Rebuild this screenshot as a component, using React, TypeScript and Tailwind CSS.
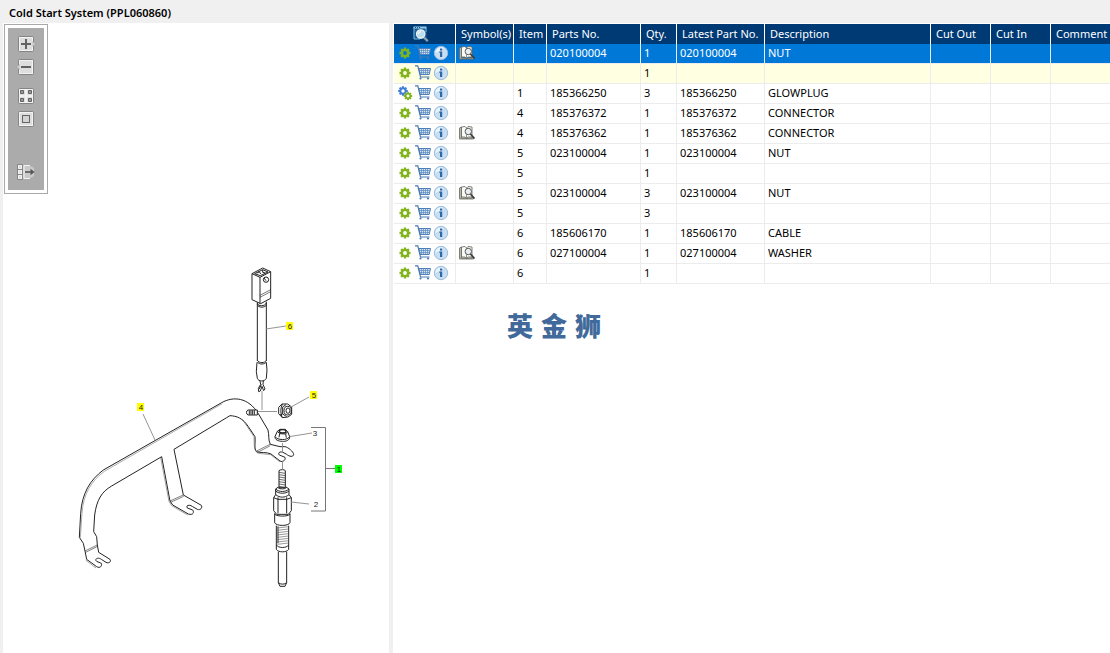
import { useState } from 'react'
import type { ReactNode } from 'react'

type Part = {
  item: string
  partNo: string
  qty: string
  description: string
  symbol?: boolean
  kit?: boolean
}

const parts: Part[] = [
  { item: '', partNo: '020100004', qty: '1', description: 'NUT', symbol: true },
  { item: '', partNo: '', qty: '1', description: '' },
  { item: '1', partNo: '185366250', qty: '3', description: 'GLOWPLUG', kit: true },
  { item: '4', partNo: '185376372', qty: '1', description: 'CONNECTOR' },
  { item: '4', partNo: '185376362', qty: '1', description: 'CONNECTOR', symbol: true },
  { item: '5', partNo: '023100004', qty: '1', description: 'NUT' },
  { item: '5', partNo: '', qty: '1', description: '' },
  { item: '5', partNo: '023100004', qty: '3', description: 'NUT', symbol: true },
  { item: '5', partNo: '', qty: '3', description: '' },
  { item: '6', partNo: '185606170', qty: '1', description: 'CABLE' },
  { item: '6', partNo: '027100004', qty: '1', description: 'WASHER', symbol: true },
  { item: '6', partNo: '', qty: '1', description: '' },
]

const headers = ['Symbol(s)', 'Item', 'Parts No.', 'Qty.', 'Latest Part No.', 'Description', 'Cut Out', 'Cut In', 'Comment']

function Gear({ cx, cy, r, color }: { cx: number; cy: number; r: number; color: string }) {
  return (
    <g stroke={color} fill="none">
      {[0, 45, 90, 135].map((a) => (
        <path key={a} d={`M${cx - r} ${cy}H${cx - r * 0.55}M${cx + r * 0.55} ${cy}H${cx + r}`} strokeWidth={r * 0.42} transform={`rotate(${a} ${cx} ${cy})`} />
      ))}
      <circle cx={cx} cy={cy} r={r * 0.56} strokeWidth={r * 0.42} />
    </g>
  )
}

function GearIcon({ kit }: { kit?: boolean }) {
  return (
    <svg width="16" height="16" viewBox="0 0 16 16">
      {kit ? (
        <>
          <Gear cx={6} cy={6} r={4.8} color="#3f7fd6" />
          <Gear cx={11} cy={11} r={4.2} color="#7fb51c" />
        </>
      ) : (
        <Gear cx={8} cy={8} r={5.5} color="#82b41e" />
      )}
    </svg>
  )
}

function CartIcon() {
  return (
    <svg width="18" height="16" viewBox="0 0 18 16" fill="none">
      <path d="M3.8 3.500H15.500L14.200 9.500H5.200Z" fill="#d3e2f2" stroke="#4d7db3" />
      <path d="M4.500 5.500H15M5 7.500H14.600M6.500 3.500V9.500M8.500 3.500V9.500M10.500 3.500V9.500M12.500 3.500V9.500" stroke="#5c8bbf" strokeWidth=".7" />
      <path d="M0 .8H2.800L5.500 12H14.500" stroke="#4b7bb0" strokeWidth="1.2" />
      <circle cx="5.5" cy="13.5" r="1.1" fill="#4b7bb0" />
      <circle cx="13" cy="13.5" r="1.1" fill="#4b7bb0" />
    </svg>
  )
}

function InfoIcon() {
  return (
    <svg width="16" height="16" viewBox="0 0 16 16">
      <circle cx="8" cy="8" r="6.7" fill="#c9dff1" stroke="#9abddd" />
      <path d="M2.5 8A5.5 5.5 0 0 1 11 3.3Z" fill="#eaf4fb" />
      <path d="M7 3.5H9.2V5.4H7ZM6.4 6.6H9.2V12H7V8H6.4Z" fill="#2c69a9" />
    </svg>
  )
}

function BookIcon() {
  return (
    <svg width="18" height="16" viewBox="0 0 18 16">
      <path d="M.500 3L2.500 2V13H7L8 14L9 13H13V12L14.500 13V14H.500Z" fill="#b4b4a8" stroke="#6a6a62" strokeWidth=".8" />
      <path d="M2.500 2L6 1.500L7.500 3L9 1.500L13 2V12L9 12L7.500 13.300L6 12H2.500Z" fill="#fafaf6" stroke="#63635c" strokeWidth=".8" />
      <path d="M7.500 3V13" stroke="#77776e" strokeWidth=".8" />
      <circle cx="9.3" cy="6.5" r="3.2" fill="#e9eef2" stroke="#5a5a5a" />
      <path d="M11.500 9L15.500 13.500" stroke="#3c3c3c" strokeWidth="1.7" />
    </svg>
  )
}

function SearchWindowIcon() {
  return (
    <svg width="18" height="18" viewBox="0 0 18 18">
      <path d="M1.500 2H14.500V14H1.500Z" fill="#1d5f94" />
      <path d="M2 3V14H8M14 3V7" stroke="#6eb3db" fill="none" />
      <path d="M1.500 2.500H14.500" stroke="#8fcbe8" strokeWidth="2" />
      <path d="M3 2.500H9" stroke="#23557f" strokeDasharray="1 1" />
      <circle cx="8.7" cy="9" r="4.2" fill="#bddcec" stroke="#eef7fb" strokeWidth="1.2" />
      <path d="M6.5 9A2.5 2.5 0 0 1 9 6.7" stroke="#fff" fill="none" />
      <path d="M12 12.5L15.8 16.2" stroke="#8b9fac" strokeWidth="2.4" />
    </svg>
  )
}

function ToolButton({ label, children }: { label: string; children: ReactNode }) {
  return (
    <button type="button" aria-label={label} className="block">
      <svg width="20" height="16" viewBox="0 0 20 16">{children}</svg>
    </button>
  )
}

function Tile() {
  return (
    <>
      <rect x="2.5" y=".5" width="15" height="15" rx="1" fill="#dedede" stroke="#858585" />
      <path d="M3.5 14.5V1.5H16.5V14.5Z" fill="none" stroke="#f3f3f3" />
    </>
  )
}

function Toolbar() {
  return (
    <div className="w-11 border border-[#a9a9a9] bg-white p-[3px]">
      <div className="flex flex-col items-center bg-[#ababab] pt-2 pb-2.5">
        <div className="flex flex-col gap-[7px]">
          <ToolButton label="Zoom in">
            <Tile />
            <path d="M17 5.5L19.5 8L17 10.5Z" fill="#e6e6e6" stroke="#858585" strokeWidth=".6" />
            <path d="M10 3V13M5 8H15" stroke="#626262" strokeWidth="2" />
          </ToolButton>
          <ToolButton label="Zoom out">
            <Tile />
            <path d="M3 5.5L.5 8L3 10.5Z" fill="#e6e6e6" stroke="#858585" strokeWidth=".6" />
            <path d="M5 8H15" stroke="#626262" strokeWidth="2" />
          </ToolButton>
        </div>
        <div className="mt-[13px] flex flex-col gap-[7px]">
          <ToolButton label="Fit to window">
            <Tile />
            <path d="M10 2V14M4 8H16" stroke="#f1f1f1" strokeWidth="2" />
            <path d="M4.5 2.5H7.5V5.5H4.5ZM12.5 2.5H15.5V5.5H12.5ZM4.5 10.5H7.5V13.5H4.5ZM12.5 10.5H15.5V13.5H12.5Z" fill="#999" stroke="#656565" />
          </ToolButton>
          <ToolButton label="Actual size">
            <Tile />
            <rect x="6.5" y="4.5" width="7" height="7" fill="#d3d3d3" stroke="#656565" />
          </ToolButton>
        </div>
        <div className="mt-[37px]">
          <ToolButton label="Hide list">
            <path d="M7 1H13L18 4V12L13 15H7Z" fill="#c9c9c9" />
            <path d="M1.5 .5H6.5V15.5H1.5ZM1.5 5.5H6.5M1.5 10.5H6.5" fill="#dedede" stroke="#858585" />
            <path d="M2.5 1.5H5.5V4.5H2.5ZM2.5 6.5H5.5V9.5H2.5ZM2.5 11.5H5.5V14.5H2.5Z" fill="none" stroke="#f3f3f3" />
            <path d="M14 1.5H8V14.5H14" fill="none" stroke="#f3f3f3" />
            <path d="M9 8H16" stroke="#565656" strokeWidth="1.6" />
            <path d="M14.5 4.8L18.5 8L14.5 11.2Z" fill="#565656" />
          </ToolButton>
        </div>
      </div>
    </div>
  )
}

function Callout({ x, y, n, fill }: { x: number; y: number; n: string; fill?: string }) {
  return (
    <g>
      {fill && <rect x={x} y={y} width="7" height="8" fill={fill} />}
      <text x={x + 4} y={y + 7} textAnchor="middle" fontSize="8" fill="#222" className="font-['Liberation_Sans',sans-serif]">{n}</text>
    </g>
  )
}

function Drawing() {
  return (
    <svg width="290" height="340" viewBox="70 260 290 340" fill="none" role="img" aria-label="Exploded view">
      {/* bracket */}
      <g transform="translate(70 390) scale(.33333)" stroke="#222" strokeWidth="3" strokeLinejoin="round">
        <path d="M45 483L40 460L28 442L32 370C36 310 60 270 100 240L455 38C490 18 535 22 565 71L594 120C598 135 594 150 601 163L630 170H645C655 172 670 185 671 193C670 202 658 200 650 193L639 187C628 183 623 190 628 195L645 202C648 210 638 218 630 213L603 192C590 185 570 190 560 185C551 175 557 160 555 140L535 110C518 84 500 78 480 77L470 83L312 178L340 315L394 346C398 352 392 362 382 358L368 350C360 343 346 345 352 354L368 360C373 366 370 377 355 372L308 345L300 333L275 200L125 288C95 305 80 330 74 375L71 425L80 440L82 465L86 487L120 508C124 514 118 522 108 517L94 508C84 500 72 508 80 514L94 520C97 528 90 536 80 530L50 508Z" />
        <path d="M31 443L36 370C40 312 63 274 103 244L457 41" stroke="#777" strokeWidth="1.8" />
        <path d="M272 203L297 334L305 347L353 375M47 510L78 534M517 88L552 140L553 170C555 186 562 192 575 191L602 194L630 216" stroke="#666" strokeWidth="1.8" />
        <path d="M45 483L82 465M47 487L83 469M300 333L340 315M302 337L341 319M560 183L600 163M563 187L601 167" strokeWidth="1.7" />
      </g>

      {/* connector, cable and fork */}
      <g transform="translate(230 255) scale(.33333)" stroke="#222" strokeWidth="3" strokeLinejoin="round">
        <path d="M66 56L98 39L122 50V130L92 146L66 134ZM66 56L90 67L122 50M90 67V146" />
        <path d="M74 56L98 44L114 51L91 62ZM82 54L88 50L92 57M98 45V52L106 54" />
        <circle cx="108" cy="74" r="8" />
        <path d="M102 69L108 77" />
        <path d="M90 121L122 104M90 127L122 110" strokeWidth="1.8" />
        <path d="M82 142V318M109 140V318" />
        <path d="M82 144C84 155 105 155 109 144M82 149C84 159 107 159 109 149M82 316C87 325 105 325 109 316M82 321C87 329 105 329 109 321" />
        <path d="M81 322L79 350L82 370C85 380 104 381 109 370L111 345L109 322" />
        <path d="M90 378L92 388L85 400L86 410L91 408L96 394L101 407L105 402L99 388L100 378M88 402L94 388" />
      </g>

      {/* stud and nuts */}
      <g transform="translate(230 385) scale(.33333)" stroke="#222" strokeWidth="3" strokeLinejoin="round">
        <path d="M54 75H82V90H54C48 88 48 77 54 75Z" fill="#fff" />
        <path d="M58 76V89M63 76V89M68 76V89M73 76V89" strokeWidth="3" />
        <path d="M146 67L156 57H173L185 66V88L174 96L157 98L146 86Z" fill="#fff" />
        <path d="M157 57C151 68 151 87 157 98M158 66L168 59M158 66V87L170 95M158 87L150 90" />
        <ellipse cx="173" cy="77" rx="11" ry="13" />
        <ellipse cx="174" cy="77" rx="6" ry="8" strokeWidth="3" />
        <path d="M142 139L150 133H166L173 140L179 155C180 166 167 170 157 169C145 169 134 164 135 155Z" fill="#fff" />
        <path d="M142 139L149 146L167 147L173 140M149 146L147 157M167 147L169 158M135 155C142 166 172 167 179 155" />
        <ellipse cx="158" cy="139" rx="10" ry="5" strokeWidth="4" />
      </g>

      {/* glow plug */}
      <g transform="translate(260 460) scale(.33333)" stroke="#222" strokeWidth="3" strokeLinejoin="round">
        <path d="M57 32C61 28 73 28 76 32V83H57Z" />
        <path d="M57 37L76 40M57 44L76 47M57 51L76 54M57 58L76 61M57 65L76 68M57 72L76 75M57 79L76 82" strokeWidth="2" />
        <path d="M55 81L47 87V104M78 81L87 87V104M47 87C57 97 77 97 87 87M47 93C57 102 77 102 87 93M54 83C60 88 74 88 79 83" />
        <path d="M41 113L47 104C60 114 74 114 87 104L94 113V152L85 163H50L41 152ZM54 112V160M80 112V160M41 113L54 118H80L94 113" />
        <path d="M44 160V188C48 199 86 199 90 188V160M44 163C54 170 82 170 90 163" />
        <path d="M49 197V268C55 278 80 278 86 268V197M54 199V250M49 255C55 265 80 265 86 255" />
        <path d="M52 204L86 200M52 211L86 207M52 218L86 214M52 225L86 221M52 232L86 228M52 239L86 235M52 246L86 242M52 253L86 249" stroke="#555" strokeWidth="1.8" />
        <path d="M55 275V368L60 379H75L80 368V275M55 368C62 374 74 374 80 368" />
      </g>

      {/* leaders */}
      <path d="M266 329L286 326M262 391V410M258 411.5H277M291 407L309 397M290 436.5L312 433M291 502L309 504M143 414L155 440M282.5 443V453M282.5 461V470" stroke="#888" strokeWidth=".9" />
      <path d="M311 427.5H325.5V511H311M325.5 468.5H336" stroke="#777" />

      <Callout x={286} y={322} n="6" fill="#ff0" />
      <Callout x={310} y={391} n="5" fill="#ff0" />
      <Callout x={137} y={403} n="4" fill="#ff0" />
      <Callout x={335} y={465} n="1" fill="#0f0" />
      <Callout x={311} y={429} n="3" />
      <Callout x={312} y={500} n="2" />
    </svg>
  )
}

function PartsTable() {
  const [selected, setSelected] = useState(0)

  const rowClass = (i: number) => {
    if (i === selected) return 'bg-[#0078d7] text-white'
    return i === 1 ? 'bg-[#ffffe1]' : 'bg-white'
  }

  return (
    <table className="w-full min-w-[716px] table-fixed border-separate border-spacing-0 text-[11px] leading-4">
      <colgroup>
        <col className="w-[62px]" />
        <col className="w-[58px]" />
        <col className="w-[33px]" />
        <col className="w-[94px]" />
        <col className="w-9" />
        <col className="w-[88px]" />
        <col className="w-[166px]" />
        <col className="w-[60px]" />
        <col className="w-[60px]" />
        <col />
      </colgroup>
      <thead>
        <tr className="h-5 bg-[#003a75] text-white">
          <th className="border-r border-white p-0">
            <button type="button" aria-label="Search parts" className="mr-auto ml-[18px] block">
              <SearchWindowIcon />
            </button>
          </th>
          {headers.map((h) => (
            <th key={h} className="border-r border-white p-0 pl-[5px] text-left font-normal whitespace-nowrap last:border-r-0">{h}</th>
          ))}
        </tr>
      </thead>
      <tbody>
        {parts.map((p, i) => (
          <tr key={i} onClick={() => setSelected(i)} className={`h-5 *:border-b *:border-[#ececec] *:p-0 *:pt-px *:pl-[3px] *:align-top *:whitespace-nowrap *:not-last:border-r ${rowClass(i)}`}>
            <td>
              <div className="flex items-center">
                <button type="button" aria-label="Options"><GearIcon kit={p.kit} /></button>
                <button type="button" aria-label="Add to cart" className="ml-0.5"><CartIcon /></button>
                <button type="button" aria-label="Information"><InfoIcon /></button>
              </div>
            </td>
            <td>{p.symbol && <BookIcon />}</td>
            <td>{p.item}</td>
            <td>{p.partNo}</td>
            <td>{p.qty}</td>
            <td>{p.partNo}</td>
            <td>{p.description}</td>
            <td></td>
            <td></td>
            <td></td>
          </tr>
        ))}
      </tbody>
    </table>
  )
}

export default function App() {
  return (
    <div className="flex min-h-screen flex-col overflow-hidden bg-[#f0f0f0] font-['Noto_Sans','Noto_Sans_CJK_SC',sans-serif] text-black">
      <h1 className="pt-[5px] pb-0.5 pl-[9px] text-[11px] leading-4 font-semibold">Cold Start System (PPL060860)</h1>
      <main className="flex flex-1 gap-1 pl-[3px]">
        <section className="w-[386px] shrink-0 bg-white pt-px pl-px">
          <Toolbar />
          <div className="mt-[66px] ml-[66px]">
            <Drawing />
          </div>
        </section>
        <section className="min-w-0 flex-1 bg-white pt-px pl-px">
          <PartsTable />
          <div className="mt-6 ml-[113px] flex gap-2 text-[26px] leading-9 font-black text-[#41699a]">
            <span>英</span>
            <span>金</span>
            <span>狮</span>
          </div>
        </section>
      </main>
    </div>
  )
}
